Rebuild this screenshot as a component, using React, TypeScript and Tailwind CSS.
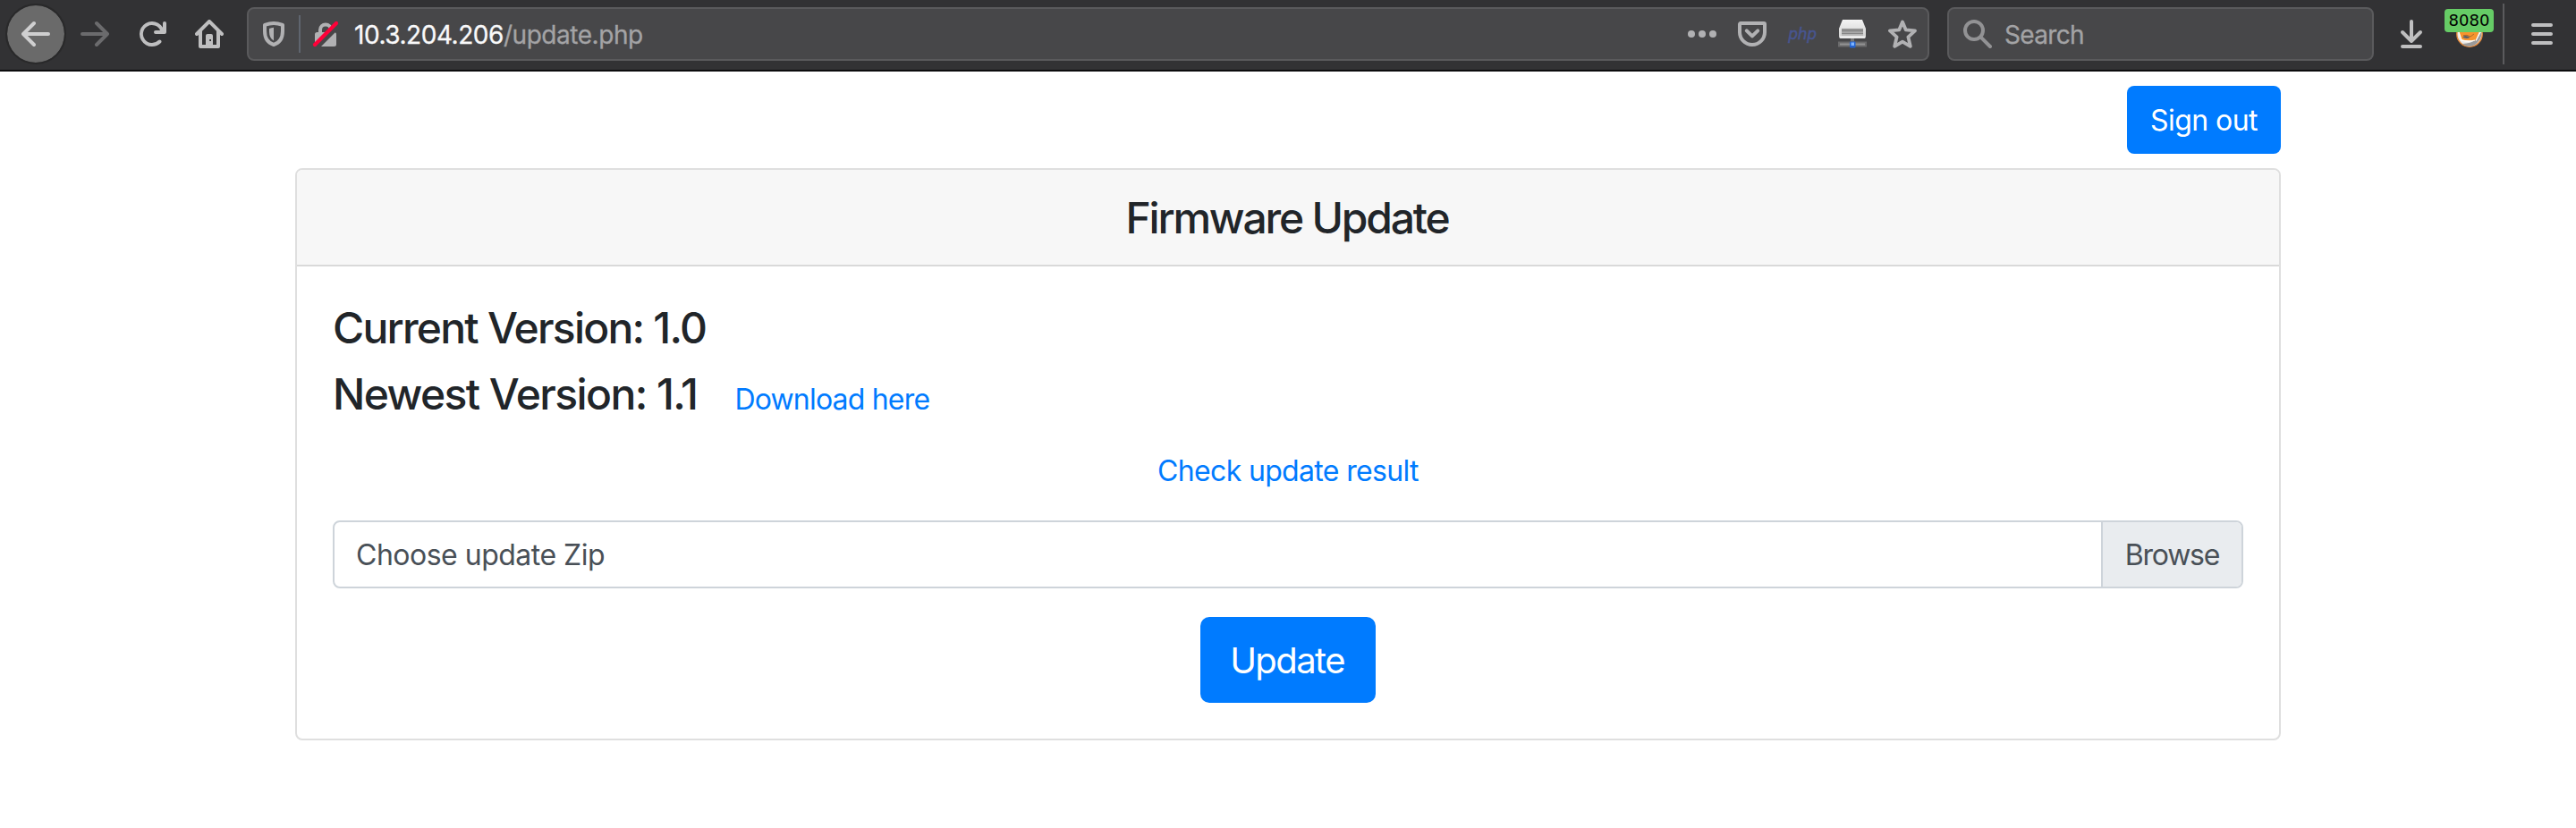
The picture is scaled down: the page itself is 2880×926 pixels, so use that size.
import React from "react";

const ICON = "block size-8 shrink-0";

function BackIcon() {
  return (
    <svg viewBox="0 0 16 16" className={ICON} fill="none" stroke="#cfcfd0" strokeWidth="2" strokeLinecap="round" strokeLinejoin="round">
      <path d="M7 2 1 8l6 6M1 8h14" />
    </svg>
  );
}

function ForwardIcon() {
  return (
    <svg viewBox="0 0 16 16" className={ICON} fill="none" stroke="#6b6b6d" strokeWidth="2" strokeLinecap="round" strokeLinejoin="round">
      <path d="m9 2 6 6-6 6M15 8H1" />
    </svg>
  );
}

function ReloadIcon() {
  return (
    <svg viewBox="0 0 16 16" className={ICON} fill="#bfbfc0">
      <path d="M15 1a1 1 0 0 0-1 1v2.418A6.995 6.995 0 1 0 8 15a6.954 6.954 0 0 0 4.95-2.05 1 1 0 0 0-1.414-1.414A5.019 5.019 0 1 1 12.549 6H10a1 1 0 0 0 0 2h5a1 1 0 0 0 1-1V2a1 1 0 0 0-1-1z" />
    </svg>
  );
}

function HomeIcon() {
  return (
    <svg viewBox="0 0 16 16" className={ICON} fill="#bfbfc0" fillRule="evenodd">
      <path d="M15.707 7.293l-7-7a1 1 0 0 0-1.414 0l-7 7a1 1 0 0 0 1.414 1.414L2 8.414V15a1 1 0 0 0 1 1h10a1 1 0 0 0 1-1V8.414l.293.293a1 1 0 0 0 1.414-1.414zM12 14h-2V9a1 1 0 0 0-1-1H7a1 1 0 0 0-1 1v5H4V6.414l4-4 4 4zM8.1 11H9v1h-.9z" />
    </svg>
  );
}

function ShieldIcon() {
  return (
    <svg viewBox="0 0 16 16" className={ICON}>
      <path d="M3 2.9C4.8 2.3 6.4 2 8 2s3.200.3 5 .9V6.400C13 10.300 11.200 13 8 14 4.800 13 3 10.300 3 6.400z" fill="none" stroke="#b1b1b3" strokeWidth="2" strokeLinejoin="round" />
      <path d="M5.500 5Q6.700 4.500 8 4.400V11.800C6.300 10.900 5.500 9 5.500 6.800z" fill="#b1b1b3" />
    </svg>
  );
}

function InsecureIcon() {
  return (
    <svg viewBox="0 0 32 32" className={ICON}>
      <path d="M10 15V11.500a6 6 0 0 1 12 0V15" fill="none" stroke="#b1b1b3" strokeWidth="4" />
      <rect x="4" y="14" width="24" height="16" rx="2.500" fill="#b1b1b3" />
      <path d="M6.500 31 30.500 7" stroke="#474749" strokeWidth="5" />
      <path d="M4 28 28 4" stroke="#ff0039" strokeWidth="4.200" strokeLinecap="round" />
    </svg>
  );
}

function PocketIcon() {
  return (
    <svg viewBox="0 0 16 16" className={ICON} fill="none" stroke="#b1b1b3" strokeWidth="2" strokeLinecap="round" strokeLinejoin="round">
      <path d="M1.500 2h13a.5.5 0 0 1 .5.5V7A7 7 0 0 1 1 7V2.500A.5.5 0 0 1 1.500 2z" />
      <path d="m4.900 6.200 3.100 3 3.100-3" />
    </svg>
  );
}

function DriveIcon() {
  return (
    <svg viewBox="0 0 32 32" className={ICON}>
      <defs>
        <linearGradient id="driveTop" x1="0" y1="0" x2="0" y2="1">
          <stop offset="0" stopColor="#f4f4f4" />
          <stop offset="1" stopColor="#cfcfcf" />
        </linearGradient>
        <linearGradient id="driveFace" x1="0" y1="0" x2="0" y2="1">
          <stop offset="0" stopColor="#8d8d8d" />
          <stop offset="1" stopColor="#bdbdbd" />
        </linearGradient>
      </defs>
      <path d="M5 0h22l4 10v9q0 2-2 2H3q-2 0-2-2v-9z" fill="url(#driveTop)" />
      <rect x="4" y="10" width="24" height="8" fill="url(#driveFace)" />
      <path d="M4 12.500h24M4 15.500h24" stroke="#7b7b7b" strokeWidth=".8" />
      <path d="M2 19.500h28" stroke="#f2f2f2" strokeWidth="2" />
      <rect x="14" y="21" width="4" height="4" fill="#777" />
      <rect x="0" y="24.500" width="32" height="6" fill="#6b6b6c" />
      <path d="M2 27.500h28" stroke="#929293" strokeWidth="2" />
      <rect x="13" y="24.500" width="6.500" height="7" rx="1" fill="#2463cf" />
      <rect x="14.500" y="25.500" width="3.500" height="3.500" fill="#7db4ff" />
    </svg>
  );
}

function StarIcon() {
  return (
    <svg viewBox="0 0 16 16" className={ICON} fill="none" stroke="#b1b1b3" strokeWidth="1.900" strokeLinejoin="round">
      <path d="m8 1.200 1.900 4.500 5.100.5-3.800 3.500 1.200 5.200L8 12.300l-4.400 2.600 1.200-5.200L1 6.200l5.100-.5z" />
    </svg>
  );
}

function SearchIcon() {
  return (
    <svg viewBox="0 0 16 16" className={ICON} fill="none" stroke="#929294" strokeWidth="2" strokeLinecap="round">
      <circle cx="6" cy="6" r="5" />
      <path d="m9.800 9.800 5.200 5.200" />
    </svg>
  );
}

function DownloadIcon() {
  return (
    <svg viewBox="0 0 16 16" className={ICON} fill="none" stroke="#bfbfc0" strokeWidth="2" strokeLinecap="round" strokeLinejoin="round">
      <path d="M8 1v11M3 7l5 5 5-5M3 15h10" />
    </svg>
  );
}

function FoxIcon() {
  return (
    <svg viewBox="0 0 32 32" className={ICON}>
      <circle cx="16" cy="16" r="14.200" fill="#e9e9e6" stroke="#e5893a" strokeWidth="1.400" />
      <path d="M26 24a12 12 0 0 1-18 3q10-.5 14-4l7-9q1 6-3 10z" fill="#9a9a9a" />
      <path d="M4 10 29 8 23 23Q14 25 6 22z" fill="#f7942d" />
      <path d="M28.500 13 23 23.500M4 14l3 9q8 2 15 0" fill="none" stroke="#fff" strokeWidth="1.300" />
      <path d="M8 19.500q4-3 8.500.5-4.500 2-8.500-.5z" fill="#59616b" />
      <path d="M9 17.500q4-1 8 1.500l4-3" fill="none" stroke="#8a5a2c" strokeWidth=".7" />
    </svg>
  );
}

function MenuIcon() {
  return (
    <svg viewBox="0 0 16 16" className={ICON} fill="none" stroke="#bfbfc0" strokeWidth="2" strokeLinecap="round">
      <path d="M3 3h10M3 8h10M3 13h10" />
    </svg>
  );
}

function Toolbar() {
  return (
    <header className="flex h-20 items-start border-b-2 border-[#0c0c0d] bg-[#323234] pt-2 pl-2 text-[28px]">
      <div className="-mt-0.5 flex size-16 shrink-0 items-center justify-center rounded-full bg-[#6a6a6a] outline-2 outline-[#29292a]">
        <BackIcon />
      </div>
      <div className="ml-[18px] flex h-15 items-center gap-8">
        <ForwardIcon />
        <ReloadIcon />
        <HomeIcon />
      </div>
      <div className="ml-[26px] flex h-15 w-[1881px] items-center rounded-lg border-2 border-[#5a5a5c] bg-[#474749] pl-3">
        <ShieldIcon />
        <div className="ml-3 h-[42px] w-0.5 bg-[#5f656f]" />
        <div className="ml-3">
          <InsecureIcon />
        </div>
        <div className="ml-4 grow pt-0.5 leading-8 tracking-[-0.46px] whitespace-pre text-[#a3a3a5] [-webkit-text-stroke:0.3px]">
          <span className="text-[#f9f9fa]">10.3.204.206</span>
          <span>/update.php</span>
        </div>
        <div className="flex items-center gap-6 pr-3">
          <div className="flex w-8 justify-between">
            <i className="size-2 rounded-full bg-[#b1b1b3]" />
            <i className="size-2 rounded-full bg-[#b1b1b3]" />
            <i className="size-2 rounded-full bg-[#b1b1b3]" />
          </div>
          <PocketIcon />
          <div className="flex h-8 w-8 items-center justify-center font-['DejaVu_Sans'] text-[17px] leading-none tracking-[-0.3px] text-[#47558f] italic [-webkit-text-stroke:0.5px]">php</div>
          <DriveIcon />
          <StarIcon />
        </div>
      </div>
      <div className="ml-5 flex h-15 w-[477px] items-center rounded-lg border-2 border-[#5a5a5c] bg-[#474749] pl-4">
        <SearchIcon />
        <span className="ml-3.5 pt-0.5 leading-8 tracking-[-0.67px] text-[#a3a3a5] [-webkit-text-stroke:0.3px]">Search</span>
      </div>
      <div className="ml-[26px] flex h-15 items-center">
        <DownloadIcon />
        <div className="relative ml-[33px]">
          <FoxIcon />
          <span className="absolute -top-3 -left-3 flex h-[26px] w-[55px] items-center justify-center rounded bg-[#66cc66] font-['DejaVu_Sans'] text-[18px] text-black">8080</span>
        </div>
      </div>
      <div className="-mt-1 ml-[21px] h-[68px] w-0.5 bg-[#5b5b5d]" />
      <div className="ml-[26px] flex h-15 items-center">
        <MenuIcon />
      </div>
    </header>
  );
}

export default function App() {
  return (
    <div className="h-[926px] overflow-hidden bg-white font-['Inter','Liberation_Sans',sans-serif] text-[32px] leading-[48px] text-[#212529]">
      <Toolbar />
      <main className="mx-auto w-[2220px] pt-4">
        <div className="flex justify-end">
          <button className="h-[76px] w-[172px] rounded-lg bg-[#007bff] pt-0.5 tracking-[-0.56px] text-white">Sign out</button>
        </div>
        <section className="mt-4 h-[640px] rounded-lg border-2 border-[#dfdfdf] bg-white">
          <h1 className="flex h-[108px] items-center justify-center rounded-t-md border-b-2 border-[#d9d9d9] bg-[#f7f7f7] pt-0.5 pr-0.5 text-[48px] font-medium tracking-[-2.2px]">Firmware Update</h1>
          <div className="px-10 pt-10">
            <h2 className="text-[48px] leading-[58px] font-medium tracking-[-1.77px]">Current Version: 1.0</h2>
            <div className="mt-4 flex h-[58px] items-baseline">
              <h2 className="text-[48px] leading-[58px] font-medium tracking-[-1.58px]">Newest Version: 1.1</h2>
              <a className="ml-[42px] tracking-[-0.81px] text-[#007bff]">Download here</a>
            </div>
            <div className="mt-[33px] text-center tracking-[-0.66px] text-[#007bff]">Check update result</div>
            <div className="mt-[31px] flex h-[76px] overflow-hidden rounded-lg border-2 border-[#ced4da] text-[#495057]">
              <div className="flex grow items-center pt-0.5 pl-6 tracking-[-0.5px]">Choose update Zip</div>
              <div className="flex w-[157px] items-center justify-center border-l-2 border-[#ced4da] bg-[#e9ecef] pt-0.5 tracking-[-1.23px]">Browse</div>
            </div>
            <div className="mt-8 flex justify-center">
              <button className="h-24 w-49 rounded-[10px] bg-[#007bff] pt-0.5 pr-0.5 text-[40px] tracking-[-1.58px] text-white">Update</button>
            </div>
          </div>
        </section>
      </main>
    </div>
  );
}
